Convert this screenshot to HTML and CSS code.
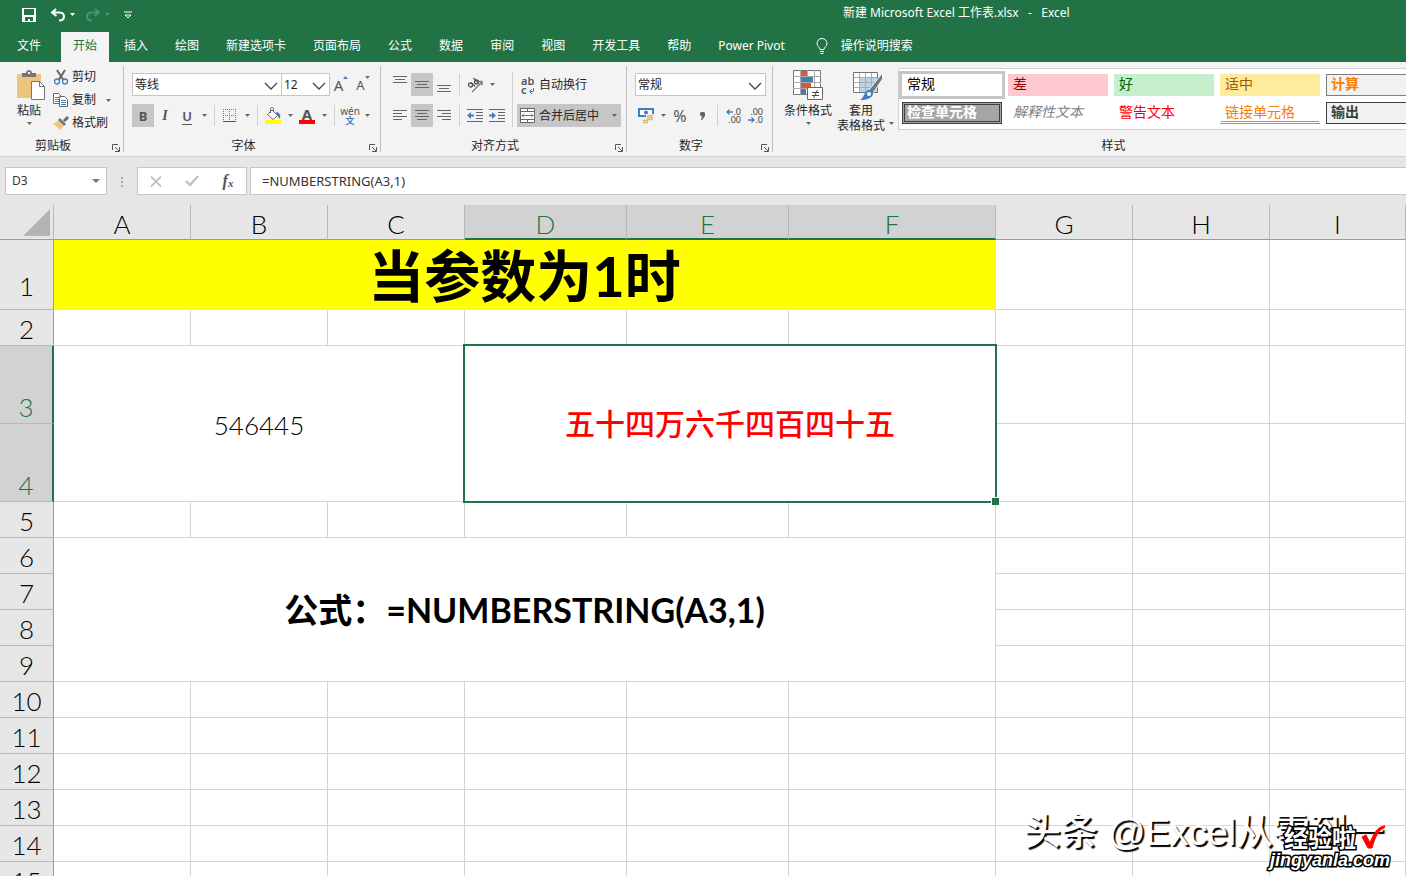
FILE: index.html
```html
<!DOCTYPE html>
<html lang="zh-CN">
<head>
<meta charset="utf-8">
<title>新建 Microsoft Excel 工作表.xlsx - Excel</title>
<link rel="stylesheet" href="styles.css">
</head>
<body>
<svg class="defs" aria-hidden="true">
  <symbol id="caret" viewBox="0 0 5 3"><path d="M0 0h5L2.500 3z" fill="currentColor"/></symbol>
  <symbol id="chev" viewBox="0 0 14 8"><path d="M1 1l6 6 6-6" fill="none" stroke="#444" stroke-width="1.300"/></symbol>
  <symbol id="launch" viewBox="0 0 8 8"><path d="M.5 6V.5H6M3 3l4 4M7.500 3v4.500H3" fill="none" stroke="#555"/></symbol>
</svg>

<header class="top">
  <div class="titlebar">
    <div class="quick">
      <button class="q-save" aria-label="保存"><svg width="14" height="14" viewBox="0 0 14 14"><path fill="#fff" fill-rule="evenodd" d="M0 0h14v14H0zM2 1v6h10V1zM3 9v4h3v-2h2v2h3V9z"/></svg></button>
      <button class="q-undo" aria-label="撤消"><svg width="16" height="14" viewBox="0 0 16 14"><path d="M6 1L2 4.500 6.500 8M2.500 4.500H9c3 0 5 1.500 5 4s-2 4-5 4" fill="none" stroke="#fff" stroke-width="2"/></svg><svg class="caret"><use href="#caret"/></svg></button>
      <button class="q-redo" aria-label="恢复"><svg width="16" height="14" viewBox="0 0 16 14"><path d="M10 1l4 3.500L9.500 8M13.500 4.500H7c-3 0-5 1.500-5 4s2 4 5 4" fill="none" stroke="currentColor" stroke-width="2"/></svg><svg class="caret"><use href="#caret"/></svg></button>
      <button aria-label="自定义快速访问工具栏"><svg width="8" height="8" viewBox="0 0 8 8"><path d="M0 1h8M1 4l3 3 3-3z" fill="none" stroke="#fff"/></svg></button>
    </div>
    <div class="doc-title">新建 Microsoft Excel 工作表.xlsx&nbsp;&nbsp; -&nbsp;&nbsp; Excel</div>
  </div>
  <nav class="tabs">
    <button class="file">文件</button>
    <button class="active">开始</button>
    <button>插入</button>
    <button>绘图</button>
    <button>新建选项卡</button>
    <button>页面布局</button>
    <button>公式</button>
    <button>数据</button>
    <button>审阅</button>
    <button>视图</button>
    <button>开发工具</button>
    <button>帮助</button>
    <button>Power Pivot</button>
    <button class="tell"><svg width="12" height="16" viewBox="0 0 12 16"><path d="M4 11.500C4 9 1 8.500 1 5.500a5 5 0 0 1 10 0C11 8.500 8 9 8 11.500zM4 13.500h4M4.500 15.500h3" fill="none" stroke="#fff"/></svg>操作说明搜索</button>
  </nav>
</header>

<section class="ribbon">
  <div class="group clipboard">
    <div class="body">
      <button class="big paste">
        <svg width="28" height="31" viewBox="0 0 28 31"><path fill="#edc47d" d="M0 4h24v24H0z"/><path fill="#757575" d="M5 3h4c0-4 6-4 6 0h4v4H5z"/><path fill="#f3f3f3" d="M11 2h2v2h-2z"/><path fill="#fff" stroke="#757575" d="M14.500 11.500h8l5 5v13h-13z"/><path fill="none" stroke="#757575" d="M22.500 11.500v5h5"/></svg>
        <span>粘贴</span><svg class="caret"><use href="#caret"/></svg>
      </button>
      <div class="stack">
        <button><svg width="16" height="16" viewBox="0 0 16 16"><path d="M4 1l6 9.500M12 1L6 10.500" stroke="#666" stroke-width="2" fill="none"/><circle cx="4" cy="12.500" r="2.500" fill="none" stroke="#3f7fbf" stroke-width="1.300"/><circle cx="12" cy="12.500" r="2.500" fill="none" stroke="#3f7fbf" stroke-width="1.300"/></svg>剪切</button>
        <button><svg width="16" height="16" viewBox="0 0 16 16"><path d="M.5 1.500h5l3 3v7h-8z" fill="#fff" stroke="#666"/><path d="M2 5.500h4M2 7.500h4M2 9.500h4" stroke="#3f7fbf"/><path d="M6.500 4.500h5l3 3v7h-8z" fill="#fff" stroke="#666"/><path d="M8 8.500h5M8 10.500h5M8 12.500h5" stroke="#3f7fbf"/></svg>复制<svg class="caret far"><use href="#caret"/></svg></button>
        <button><svg width="16" height="16" viewBox="0 0 16 16"><path d="M14 1l2 2-4 4-2-2z" fill="#666"/><path d="M7 3l6 6-2 2-6-6z" fill="#757575"/><path d="M5 5.500l5.500 5.500L7 15 0 8c2 0 4-1 5-2.500z" fill="#edc47d"/></svg>格式刷</button>
      </div>
    </div>
    <footer><span>剪贴板</span><button aria-label="剪贴板设置"><svg width="8" height="8"><use href="#launch"/></svg></button></footer>
  </div>

  <div class="group">
    <div class="body rows">
      <div class="row">
        <label class="combo w-font"><select aria-label="字体"><option>等线</option></select><svg><use href="#chev"/></svg></label>
        <label class="combo w-size"><select aria-label="字号"><option>12</option></select><svg><use href="#chev"/></svg></label>
        <button class="tool grow" aria-label="增大字号">A<svg width="5" height="3" viewBox="0 0 5 3"><path d="M0 3h5L2.500 0z" fill="#3f7fbf"/></svg></button>
        <button class="tool shrink" aria-label="减小字号">A<svg width="5" height="3" viewBox="0 0 5 3"><path d="M0 0h5L2.500 3z" fill="#3f7fbf"/></svg></button>
      </div>
      <div class="row">
        <button class="tool on bold">B</button>
        <button class="tool ital">I</button>
        <button class="tool und">U</button>
        <button class="drop" aria-label="下划线"><svg class="caret"><use href="#caret"/></svg></button>
        <i class="sep"></i>
        <button class="tool" aria-label="边框"><svg width="14" height="14" viewBox="0 0 14 14"><path d="M0 .5h14M0 6.500h14M.5 0v12M6.500 0v12M12.500 0v12" stroke="#777" stroke-dasharray="1 1"/><path d="M0 12.500h13" stroke="#555"/></svg></button>
        <button class="drop" aria-label="边框选项"><svg class="caret"><use href="#caret"/></svg></button>
        <i class="sep"></i>
        <button class="tool" aria-label="填充颜色"><svg width="16" height="17" viewBox="0 0 16 17"><path d="M7 3l5.500 5.500L8 12.500 2.500 7.500z" fill="#fff" stroke="#666"/><path d="M5.500 6V2c0-2 3-2 3 0v3" fill="none" stroke="#666"/><path d="M11 5c3 0 5 2 4 7-2-1-1-3-3-4z" fill="#3f7fbf"/><path fill="#ff0" d="M0 13h16v4H0z"/></svg></button>
        <button class="drop" aria-label="填充颜色选项"><svg class="caret"><use href="#caret"/></svg></button>
        <button class="tool color" aria-label="字体颜色"><span>A</span></button>
        <button class="drop" aria-label="字体颜色选项"><svg class="caret"><use href="#caret"/></svg></button>
        <i class="sep"></i>
        <button class="tool wen" aria-label="拼音"><span>wén</span><b>文</b></button>
        <button class="drop" aria-label="拼音选项"><svg class="caret"><use href="#caret"/></svg></button>
      </div>
    </div>
    <footer><span>字体</span><button aria-label="字体设置"><svg width="8" height="8"><use href="#launch"/></svg></button></footer>
  </div>

  <div class="group align">
    <div class="body">
      <div class="rows">
        <div class="row">
          <button class="tool hi" aria-label="顶端对齐"><svg width="14" height="8" viewBox="0 0 14 8"><path d="M0 .5h14M2 3.500h10M0 6.500h14" stroke="#666"/></svg></button>
          <button class="tool on" aria-label="垂直居中"><svg width="14" height="8" viewBox="0 0 14 8"><path d="M0 .5h14M2 3.500h10M0 6.500h14" stroke="#666"/></svg></button>
          <button class="tool lo" aria-label="底端对齐"><svg width="14" height="8" viewBox="0 0 14 8"><path d="M0 .5h14M2 3.500h10M0 6.500h14" stroke="#666"/></svg></button>
          <i class="sep"></i>
          <button class="tool" aria-label="方向"><svg width="16" height="16" viewBox="0 0 16 16"><g fill="none" stroke="#555" stroke-width="1.300"><circle cx="3.500" cy="8" r="2"/><path d="M4 5.500l4 4M6.500 1l4.500 4.500"/><circle cx="9.500" cy="5" r="2"/><path d="M5 15L15 5M11 4.500h4v4" stroke="#777"/></g></svg></button>
          <button class="drop" aria-label="方向选项"><svg class="caret"><use href="#caret"/></svg></button>
        </div>
        <div class="row">
          <button class="tool" aria-label="左对齐"><svg width="14" height="11" viewBox="0 0 14 11"><path d="M0 .5h14M0 3.500h9M0 6.500h14M0 9.500h9" stroke="#666"/></svg></button>
          <button class="tool on" aria-label="居中"><svg width="14" height="11" viewBox="0 0 14 11"><path d="M0 .5h14M2 3.500h10M0 6.500h14M2 9.500h10" stroke="#666"/></svg></button>
          <button class="tool" aria-label="右对齐"><svg width="14" height="11" viewBox="0 0 14 11"><path d="M0 .5h14M5 3.500h9M0 6.500h14M5 9.500h9" stroke="#666"/></svg></button>
          <i class="sep"></i>
          <button class="tool" aria-label="减少缩进量"><svg width="16" height="13" viewBox="0 0 16 13"><path d="M0 .5h16M9 3.500h7M9 6.500h7M9 9.500h7M0 12.500h16" stroke="#666"/><path d="M0 6.500L4 3v2.500h3v2H4V10z" fill="#3f7fbf"/></svg></button>
          <button class="tool" aria-label="增加缩进量"><svg width="16" height="13" viewBox="0 0 16 13"><path d="M0 .5h16M9 3.500h7M9 6.500h7M9 9.500h7M0 12.500h16" stroke="#666"/><path d="M7 6.500L3 3v2.500H0v2h3V10z" fill="#3f7fbf"/></svg></button>
        </div>
      </div>
      <i class="sep tall"></i>
      <div class="rows">
        <button class="wide"><span class="wrap-ic"><span>ab</span><span>c<svg width="5" height="6" viewBox="0 0 5 6"><path d="M4.500 0v3.500H1M3 1L.5 3.500 3 6" fill="none" stroke="#3f7fbf"/></svg></span></span>自动换行</button>
        <button class="wide on"><svg width="15" height="15" viewBox="0 0 15 15"><path d="M.5.5h14v14H.5z" fill="#fff" stroke="#666"/><path d="M0 3.500h15M0 11.500h15M7.500 0v3M7.500 12v3" stroke="#666"/><path d="M2 7.500h11M4 5.500l-2 2 2 2M11 5.500l2 2-2 2" fill="none" stroke="#3f7fbf"/></svg>合并后居中<svg class="caret far"><use href="#caret"/></svg></button>
      </div>
    </div>
    <footer><span>对齐方式</span><button aria-label="对齐设置"><svg width="8" height="8"><use href="#launch"/></svg></button></footer>
  </div>

  <div class="group">
    <div class="body rows">
      <div class="row">
        <label class="combo w-num"><select aria-label="数字格式"><option>常规</option></select><svg><use href="#chev"/></svg></label>
      </div>
      <div class="row">
        <button class="tool" aria-label="会计数字格式"><svg width="16" height="16" viewBox="0 0 16 16"><path fill="#3f7fbf" d="M0 0h16v9H0z"/><path fill="#fff" d="M2 2h12v5H2z"/><circle cx="8" cy="4.500" r="2" fill="#3f7fbf"/><path d="M8 6h8v7h-5v3H4v-5h4z" fill="#f3f3f3"/><path d="M9 7.500h6M9 9.500h6M9 11.500h6M5 12.500h5M5 14.500h5" stroke="#e8b660" stroke-width="1.500"/></svg></button>
        <button class="drop" aria-label="货币选项"><svg class="caret"><use href="#caret"/></svg></button>
        <button class="tool pct">%</button>
        <button class="tool" aria-label="千位分隔"><svg width="5" height="8" viewBox="0 0 5 8"><path d="M1 0h3l1 1v3L2 8H1l1-4H1L0 3V1z" fill="#666"/></svg></button>
        <i class="sep"></i>
        <button class="tool dec" aria-label="增加小数位数"><span><svg width="7" height="6" viewBox="0 0 7 6"><path d="M1 3h6M3.500.5L1 3l2.500 2.500" fill="none" stroke="#3f7fbf" stroke-width="1.300"/></svg>.0</span><span>.00</span></button>
        <button class="tool dec" aria-label="减少小数位数"><span>.00</span><span><svg width="7" height="6" viewBox="0 0 7 6"><path d="M0 3h6M3.500.5L6 3 3.500 5.500" fill="none" stroke="#3f7fbf" stroke-width="1.300"/></svg>.0</span></button>
      </div>
    </div>
    <footer><span>数字</span><button aria-label="数字设置"><svg width="8" height="8"><use href="#launch"/></svg></button></footer>
  </div>

  <div class="group styles">
    <div class="body">
      <button class="big cond">
        <svg width="30" height="31" viewBox="0 0 30 31"><path fill="#fff" stroke="#757575" d="M.5.5h27v24H.5z"/><path d="M0 6.500h28M0 12.500h28M0 18.500h28M7.500 0v25M14.500 0v25M21.500 0v25" stroke="#aaa"/><path fill="#d65b3d" d="M8 1h6v5H8zM8 13h10v5H8z"/><path fill="#3f7fbf" d="M8 7h12v5H8zM8 19h5v5H8z"/><path fill="#fff" stroke="#666" d="M14.500 17.500h15v12h-15z"/><path d="M19 22.500h7M19 25.500h7M24.500 20l-4 8" stroke="#444"/></svg>
        <span>条件格式</span><svg class="caret"><use href="#caret"/></svg>
      </button>
      <button class="big tbl">
        <svg width="30" height="31" viewBox="0 0 30 31"><path fill="#fff" d="M.5 2.500h24v20H.5z"/><path fill="#bcd3ea" d="M7 8h18v15H7z"/><path d="M0 7.500h25M0 12.500h25M0 17.500h25M6.500 2v21M12.500 2v21M18.500 2v21" stroke="#aaa"/><path fill="none" stroke="#757575" d="M.5 2.500h24v20H.5z"/><path fill="#757575" stroke="#f3f3f3" d="M29.500 3v6L20 23l-4-3z"/><path fill="#3f7fbf" d="M15 20c3-1 6 1 5 4-1 4-6 6-13 6 4-2 4-8 8-10z"/><circle cx="16" cy="24" r="2" fill="#fff"/></svg>
        <span>套用<br>表格格式</span><svg class="caret side"><use href="#caret"/></svg>
      </button>
      <div class="gallery">
        <button class="s-normal">常规</button><button class="s-bad">差</button><button class="s-good">好</button><button class="s-mid">适中</button><button class="s-calc">计算</button>
        <button class="s-check">检查单元格</button><button class="s-note">解释性文本</button><button class="s-warn">警告文本</button><button class="s-link">链接单元格</button><button class="s-out">输出</button>
      </div>
    </div>
    <footer><span>样式</span></footer>
  </div>
</section>

<section class="formula">
  <div class="namebox"><input value="D3" aria-label="名称框"><svg width="8" height="4" viewBox="0 0 8 4"><path d="M0 0h8L4 4z" fill="#777"/></svg></div>
  <svg class="dots" width="2" height="11" viewBox="0 0 2 11"><path d="M0 0h2v2H0zM0 4h2v2H0zM0 8h2v2H0z" fill="#aaa"/></svg>
  <div class="fx">
    <button aria-label="取消"><svg width="12" height="11" viewBox="0 0 12 11"><path d="M1 .5l10 10M11 .5l-10 10" stroke="#c0c0c0" stroke-width="1.800"/></svg></button>
    <button aria-label="输入"><svg width="14" height="12" viewBox="0 0 14 12"><path d="M1 6l4 4 8-9" fill="none" stroke="#c4c4c4" stroke-width="2.500"/></svg></button>
    <button class="fn" aria-label="插入函数">f<small>x</small></button>
  </div>
  <input class="expr" value="=NUMBERSTRING(A3,1)" aria-label="编辑栏">
</section>

<main class="sheet">
  <table>
    <colgroup><col class="c-head"><col class="c-n"><col class="c-n"><col class="c-n"><col class="c-m"><col class="c-m"><col class="c-l"><col class="c-n"><col class="c-n"><col></colgroup>
    <thead>
      <tr><th class="corner"><svg width="27" height="27" viewBox="0 0 27 27"><path d="M27 0v27H0z" fill="#b4b4b4"/></svg></th><th>A</th><th>B</th><th>C</th><th class="sel">D</th><th class="sel">E</th><th class="sel">F</th><th>G</th><th>H</th><th>I</th></tr>
    </thead>
    <tbody>
      <tr class="r1"><th>1</th><td colspan="6" class="banner">当参数为1时</td><td></td><td></td><td></td></tr>
      <tr><th>2</th><td></td><td></td><td></td><td></td><td></td><td></td><td></td><td></td><td></td></tr>
      <tr class="r3"><th class="sel">3</th><td colspan="3" rowspan="2">546445</td><td colspan="3" rowspan="2" class="picked">五十四万六千四百四十五</td><td></td><td></td><td></td></tr>
      <tr class="r3"><th class="sel">4</th><td></td><td></td><td></td></tr>
      <tr><th>5</th><td></td><td></td><td></td><td></td><td></td><td></td><td></td><td></td><td></td></tr>
      <tr><th>6</th><td colspan="6" rowspan="4" class="note">公式：=NUMBERSTRING(A3,1)</td><td></td><td></td><td></td></tr>
      <tr><th>7</th><td></td><td></td><td></td></tr>
      <tr><th>8</th><td></td><td></td><td></td></tr>
      <tr><th>9</th><td></td><td></td><td></td></tr>
      <tr><th>10</th><td></td><td></td><td></td><td></td><td></td><td></td><td></td><td></td><td></td></tr>
      <tr><th>11</th><td></td><td></td><td></td><td></td><td></td><td></td><td></td><td></td><td></td></tr>
      <tr><th>12</th><td></td><td></td><td></td><td></td><td></td><td></td><td></td><td></td><td></td></tr>
      <tr><th>13</th><td></td><td></td><td></td><td></td><td></td><td></td><td></td><td></td><td></td></tr>
      <tr><th>14</th><td></td><td></td><td></td><td></td><td></td><td></td><td></td><td></td><td></td></tr>
      <tr><th>15</th><td></td><td></td><td></td><td></td><td></td><td></td><td></td><td></td><td></td></tr>
    </tbody>
  </table>
  <div class="mark-author">头条 @Excel从零到一</div>
  <div class="mark-site"><div>经验啦<svg width="26" height="26" viewBox="0 0 26 26"><path d="M2 13l4-2 4 8C13 11 17 3 24 2h1l-1 2C19 5 15 13 12 24H8z" fill="#f00" stroke="#f00" stroke-width="1"/></svg></div><div class="url">jingyanla.com</div></div>
</main>
</body>
</html>
```
FILE: styles.css
```css
* { box-sizing: border-box; }
body {
  margin: 0; height: 100vh; overflow: hidden;
  display: flex; flex-direction: column;
  font: 12px/16px "Noto Sans", "Noto Sans CJK SC", sans-serif;
  color: #262626; background: #e6e6e6;
}
button, input, select { font: inherit; color: inherit; border: 0; background: none; padding: 0; margin: 0; border-radius: 0; }
button { display: flex; align-items: center; justify-content: center; white-space: nowrap; flex: none; }
svg { flex: none; display: block; }
.defs { position: absolute; width: 0; height: 0; }
.caret { width: 5px; height: 3px; color: #666; }

/* title bar and tabs */
.top { background: #217346; color: #fff; flex: none; }
.titlebar { display: flex; height: 32px; }
.quick { display: flex; width: 140px; padding: 0 0 3px 22px; }
.quick .caret { color: inherit; margin-left: 4px; }
.q-save { margin-right: 14px; }
.q-undo { margin-right: 10px; }
.q-redo { color: #4f9070; margin-right: 14px; }
.doc-title { margin-left: 50%; line-height: 26px; white-space: pre; }
.tabs { display: flex; gap: 3px; height: 30px; padding-left: 5px; }
.tabs button { padding: 0 12px 2px; }
.tabs .file { margin-right: 5px; }
.tabs .active { background: #f3f3f3; color: #217346; }
.tabs .tell { gap: 13px; margin-left: 4px; }

/* ribbon */
.ribbon { display: flex; flex: none; padding: 4px 0; background: #f3f3f3; border-bottom: 1px solid #d2d2d2; overflow: hidden; }
.group { flex: none; display: flex; flex-direction: column; height: 86px; padding-left: 8px; border-right: 1px solid #bdbdbd; }
.group .body { display: flex; height: 70px; padding-right: 6px; }
.group footer { display: flex; height: 16px; margin-left: -8px; }
.group footer span { flex: 1; text-align: center; line-height: 20px; }
.group footer button { width: 17px; align-items: flex-end; justify-content: flex-end; padding-right: 3px; }
.rows { display: flex; flex-direction: column; gap: 8px; padding-top: 7px; }
.body > .rows { flex: none; }
.row { display: flex; height: 23px; }
.tool { width: 22px; height: 23px; color: #555; }
.on { background: #c6c6c6; }
.drop { width: 12px; height: 23px; }
.sep { width: 1px; height: 21px; margin: 1px 4px; background: #d0d0d0; flex: none; }
.sep.tall { height: 55px; margin-top: 6px; }

.clipboard { width: 124px; }
.clipboard .body { padding-right: 0; }
.big { flex-direction: column; justify-content: flex-start; padding-top: 4px; text-align: center; line-height: 15px; position: relative; }
.big span { margin-top: 2px; }
.big .caret { margin-top: 4px; }
.paste { width: 42px; margin-right: 3px; }
.paste svg:first-child { margin-left: 4px; }
.stack { display: flex; flex-direction: column; }
.stack button { height: 23px; padding-bottom: 1px; justify-content: flex-start; gap: 3px; }
.stack .far { margin-left: 7px; }

.combo { display: flex; position: relative; height: 23px; border: 1px solid #c6c6c6; background: #fff; }
.combo select { appearance: none; width: 100%; padding: 0 2px; outline: 0; }
.combo svg { position: absolute; right: 3px; top: 8px; width: 14px; height: 8px; pointer-events: none; }
.w-font { width: 150px; }
.w-size { width: 48px; border-left: 0; }
.w-num { width: 131px; }
.grow, .shrink { font-size: 15px; }
.shrink { font-size: 13px; }
.grow svg, .shrink svg { margin-bottom: 14px; }
.bold { font-weight: 700; font-size: 13px; }
.ital { font: italic 700 14px "Liberation Serif", serif; }
.und { font-weight: 600; font-size: 13px; text-decoration: underline; text-underline-offset: 3px; }
.color span { width: 16px; height: 17px; line-height: 14px; font-size: 15px; font-weight: 700; border-bottom: 4px solid #f00; }
.wen { flex-direction: column; line-height: 9px; font-size: 10px; }
.wen b { color: #3f7fbf; font-size: 9px; }
.hi { padding-bottom: 10px; }
.lo { padding-top: 8px; }
.align .body { padding-right: 5px; }
.wide { height: 23px; padding: 0 3px; gap: 4px; justify-content: flex-start; }
.wide .far { margin: 0 1px 0 9px; }
.wrap-ic { width: 15px; font-size: 11px; line-height: 9px; font-weight: 600; color: #555; display: flex; flex-direction: column; }
.wrap-ic span { display: flex; align-items: flex-end; gap: 2px; padding-left: 1px; }
.pct { font-size: 16px; }
.dec { flex-direction: column; align-items: center; font-size: 9px; line-height: 8px; color: #444; }
.dec span { display: flex; align-items: center; width: 16px; justify-content: flex-end; }

.styles { border: 0; padding-left: 9px; }
.styles .body { padding-right: 24px; }
.styles footer { margin-left: -9px; }
.cond { width: 52px; }
.tbl { width: 58px; margin-left: 2px; margin-right: 4px; }
.tbl span { padding-right: 8px; }
.tbl svg:first-child { margin-left: 6px; }
.big .side { position: absolute; right: 0; top: 52px; }
.gallery { display: grid; grid-template-columns: repeat(5, 100px); gap: 6px; height: 62px; margin-top: 2px; padding: 5px 3px; border: 1px solid #d2d2d2; background: #fff; align-content: start; }
.gallery button { height: 22px; padding: 0 4px 2px; justify-content: flex-start; font-size: 14px; line-height: 18px; border: 1px solid transparent; }
.gallery .s-normal { outline: 3px solid #c6c6c6; color: #000; }
.gallery .s-bad { background: #ffc7ce; color: #9c0006; }
.gallery .s-good { background: #c6efce; color: #006100; }
.gallery .s-mid { background: #ffeb9c; color: #9c5700; }
.gallery .s-calc { background: #f2f2f2; color: #fa7d00; font-weight: 700; border-color: #7f7f7f; }
.gallery .s-check { background: #a5a5a5; color: #fff; font-weight: 700; border: 3px double #3f3f3f; padding: 0 2px 2px; }
.gallery .s-note { color: #7f7f7f; font-style: italic; }
.gallery .s-warn { color: #f00; }
.gallery .s-link { color: #fa7d00; border-bottom: 3px double #ff8001; padding-bottom: 0; }
.gallery .s-out { background: #f2f2f2; color: #3f3f3f; font-weight: 700; border-color: #3f3f3f; }

/* formula bar */
.formula { display: flex; flex: none; padding: 10px 0 10px 5px; height: 48px; align-items: stretch; color: #333; }
.namebox, .fx, .expr { border: 1px solid #c6c6c6; background: #fff; }
.namebox { display: flex; align-items: center; width: 102px; padding: 0 6px; }
.namebox input { flex: 1; min-width: 0; outline: 0; }
.dots { margin: 10px 14px; }
.fx { display: flex; width: 110px; margin-right: 3px; }
.fx button { flex: 1; }
.fn { font: italic 700 16px "Liberation Serif", serif; color: #555; }
.fn small { font-size: 11px; padding-top: 4px; }
.formula .expr { flex: 1; border-right: 0; padding: 0 11px; outline: 0; font-size: 13px; }

/* worksheet */
.sheet { flex: 1; min-height: 0; overflow: hidden; position: relative; background: #fff; }
table { width: 100%; table-layout: fixed; border-collapse: separate; border-spacing: 0; font: 300 26px/31px Lato, "Noto Sans CJK SC", sans-serif; color: #000; }
.c-head { width: 54px; }
.c-n { width: 137px; }
.c-m { width: 162px; }
.c-l { width: 207px; }
tr { height: 36px; }
th, td { padding: 4px 0 0; border: 0 solid #d4d4d4; border-width: 0 1px 1px 0; text-align: center; vertical-align: middle; font-weight: inherit; }
th { background: #e6e6e6; border-color: #b8b8b8; vertical-align: bottom; }
tbody th { border-right-color: #9b9b9b; }
thead tr { height: 35px; }
thead th { line-height: 29px; border-bottom-color: #9b9b9b; }
th.sel { background: #d2d2d2; color: #217346; }
thead th.sel { border-bottom: 2px solid #217346; line-height: 27px; }
tbody th.sel { border-right: 2px solid #217346; }
.corner svg { margin: 0 3px 3px 23px; }
.r1 { height: 70px; }
.r1 th { padding-bottom: 7px; }
.r3 { height: 78px; }
td.banner { padding: 2px 0 0; background: #ff0; border-color: #ff0; font-size: 56px; line-height: 66px; font-weight: 700; }
.picked { position: relative; padding: 0; color: #f00; font-size: 30px; font-weight: 500; }
.picked::before { content: ""; position: absolute; inset: -2px; border: 2px solid #217346; }
.picked::after { content: ""; position: absolute; right: -4px; bottom: -4px; width: 7px; height: 7px; background: #217346; border: 1px solid #fff; border-width: 1px 0 0 1px; }
.note { padding: 0; font-size: 34px; line-height: 44px; font-weight: 700; }

.mark-author { position: absolute; right: 22px; bottom: 21px; font: 500 37px/44px "Liberation Sans", "Noto Sans CJK SC", sans-serif; color: #fff; text-shadow: 2px 2px 1px #000; white-space: nowrap; }
.mark-site { position: absolute; right: 16px; bottom: 6px; color: #fff; font: 700 24px/24px "Noto Sans CJK SC", sans-serif; text-align: right; -webkit-text-stroke: 3px #000; paint-order: stroke; }
.mark-site div { display: flex; align-items: center; justify-content: flex-end; gap: 4px; padding-right: 4px; }
.mark-site .url { padding: 0; font: italic 700 18px/20px "Liberation Sans", sans-serif; }
```
